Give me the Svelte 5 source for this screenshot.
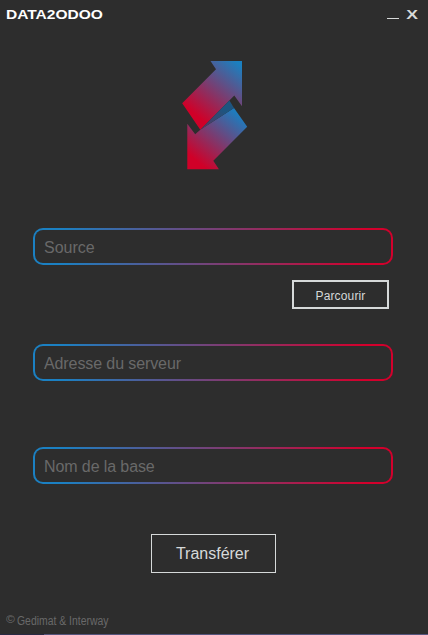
<script>
  let fields = $state([
    { id: 'source', label: 'Source', value: '' },
    { id: 'server', label: 'Adresse du serveur', value: '' },
    { id: 'base', label: 'Nom de la base', value: '' }
  ]);
</script>

<main>
  <header>
    <h1>DATA2ODOO</h1>
    <div class="controls">
      <button class="minimize" aria-label="Réduire"><span></span></button>
      <button class="close" aria-label="Fermer"><span>X</span></button>
    </div>
  </header>

  <svg class="logo" width="68" height="110" viewBox="181 60 68 110" aria-hidden="true">
    <defs>
      <linearGradient id="up" gradientUnits="userSpaceOnUse" x1="194" y1="119" x2="239" y2="64">
        <stop offset="0" stop-color="#d00028" />
        <stop offset="0.06" stop-color="#d00028" />
        <stop offset="1" stop-color="#1b80c0" />
      </linearGradient>
      <linearGradient id="down" gradientUnits="userSpaceOnUse" x1="193" y1="163" x2="235" y2="112">
        <stop offset="0" stop-color="#d00028" />
        <stop offset="0.06" stop-color="#d00028" />
        <stop offset="1" stop-color="#1e7cbe" />
      </linearGradient>
      <linearGradient id="fold" gradientUnits="userSpaceOnUse" x1="201" y1="129" x2="222" y2="108">
        <stop offset="0" stop-color="#5a355e" />
        <stop offset="1" stop-color="#1d5580" />
      </linearGradient>
    </defs>
    <path fill="url(#up)" d="M210.5 61H242V106.3L234.3 95.5L200.3 129.7L182.2 103.3L216 69.3Z" />
    <path fill="url(#down)" d="M234 108L247.2 126.7L213.3 160.7L218.9 169.3H187.3V123.8L195.2 134.2L200.3 129.7Z" />
    <path fill="url(#fold)" d="M229.4 100.5L234 108L200.3 129.7Z" />
  </svg>

  <form>
    {#each fields as field (field.id)}
      <div class="field {field.id}">
        <input placeholder={field.label} aria-label={field.label} bind:value={field.value} />
      </div>
      {#if field.id === 'source'}
        <button type="button" class="browse"><span>Parcourir</span></button>
      {/if}
    {/each}
    <button type="button" class="transfer"><span>Transférer</span></button>
  </form>

  <footer><span class="copy">©</span><span class="owner">Gedimat &amp; Interway</span></footer>
  <div class="strip"></div>
</main>

<style>
  :global(body) {
    margin: 0;
    background: #2d2d2d;
  }
  main {
    width: 428px;
    height: 635px;
    box-sizing: border-box;
    display: flex;
    flex-direction: column;
    overflow: hidden;
    background: #2d2d2d;
    font-family: 'Liberation Sans', Arial, sans-serif;
  }
  button {
    box-sizing: border-box;
    padding: 0;
    border: 0;
    background: transparent;
    color: #d6d9d9;
    font-family: inherit;
  }
  header {
    height: 28px;
    flex: none;
    display: flex;
    justify-content: space-between;
  }
  h1 {
    margin: 7px 0 0 6px;
    height: 16px;
    font: bold 13px/16px 'Liberation Sans', Arial, sans-serif;
    color: #fff;
    transform: scaleX(1.195);
    transform-origin: left;
  }
  .controls {
    display: flex;
    padding-right: 10px;
    height: 28px;
  }
  .minimize {
    width: 12px;
    margin-right: 7px;
    display: flex;
    padding-top: 18px;
  }
  .minimize span {
    width: 12px;
    height: 1px;
    background: #d6d9d9;
  }
  .close {
    width: 12px;
    height: 16px;
    margin-top: 7px;
    font: bold 13px/16px 'Liberation Sans', Arial, sans-serif;
  }
  .close span {
    display: block;
    transform: scaleX(1.35);
  }
  .logo {
    flex: none;
    margin: 32px 0 0 181px;
  }
  form {
    display: flex;
    flex-direction: column;
    padding: 58px 0 0 33px;
  }
  .field {
    width: 359.5px;
    height: 37px;
    box-sizing: border-box;
    padding: 2px;
    border-radius: 10px;
    background: linear-gradient(90deg, #1b80c2 0%, #1b80c2 8%, #d3002c 92%, #d3002c 100%);
    display: flex;
  }
  input {
    flex: 1;
    min-width: 0;
    box-sizing: border-box;
    border: 0;
    outline: 0;
    border-radius: 8px;
    padding: 2px 9px 0;
    background: #2d2d2d;
    color: #dcdfdf;
    font: 16px 'Liberation Sans', Arial, sans-serif;
    letter-spacing: -0.1px;
  }
  .source input {
    letter-spacing: 0;
  }
  input::placeholder {
    color: #696969;
    opacity: 1;
  }
  .browse {
    width: 97px;
    height: 29px;
    margin: 15px 0 35px 259px;
    border: 2px solid #d6d9d9;
    font-size: 12px;
  }
  .browse span {
    display: block;
    padding-top: 3px;
    line-height: 22px;
    letter-spacing: 0.15px;
  }
  .base {
    margin-top: 66px;
  }
  .transfer {
    width: 125px;
    height: 39px;
    margin: 50px 0 0 118px;
    padding-right: 2px;
    border: 1px solid #d6d9d9;
    font-size: 16px;
  }
  footer {
    display: flex;
    margin: 40px 0 0 6px;
    height: 16px;
    color: #696969;
    font-size: 12px;
    line-height: 16px;
  }
  .copy {
    width: 11px;
    font-size: 10px;
    line-height: 13px;
    transform: scaleX(1.2);
    transform-origin: left;
  }
  .owner {
    white-space: nowrap;
    transform: scaleX(0.868);
    transform-origin: left;
  }
  .strip {
    height: 1px;
    margin-top: auto;
    background: linear-gradient(90deg, #292944 44px, #55547c 44px);
  }
</style>
